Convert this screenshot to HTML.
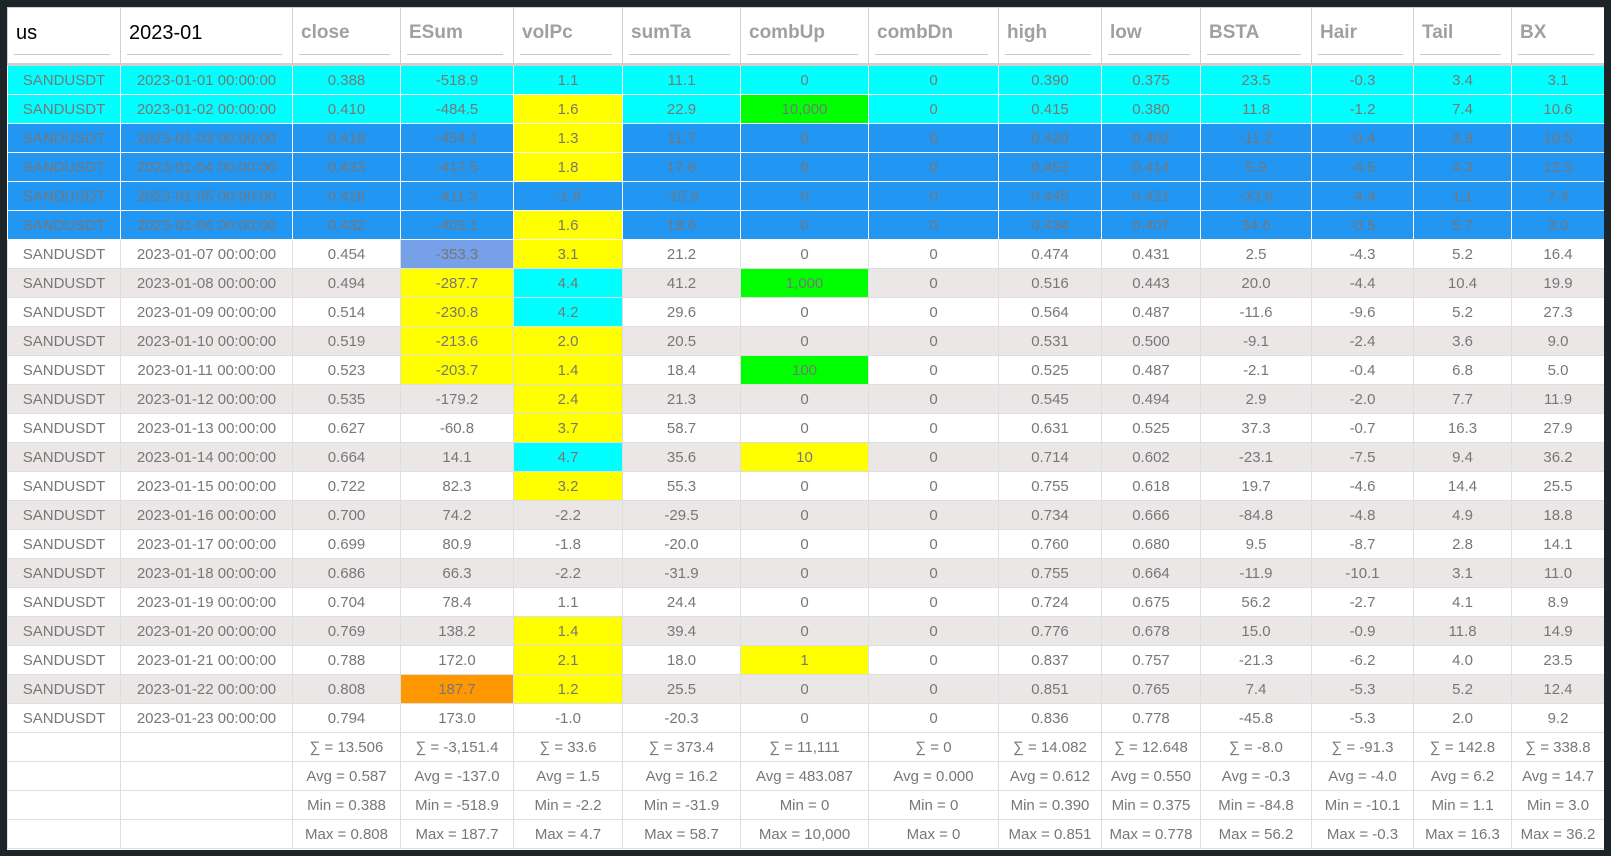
<!DOCTYPE html>
<html><head><meta charset="utf-8"><style>
html,body{margin:0;padding:0;background:#1e2528;width:1611px;height:856px;overflow:hidden}
.wrap{position:absolute;left:7px;top:7px;width:1597px;height:843px;background:#fff;overflow:hidden}
table{border-collapse:collapse;table-layout:fixed;width:1597px;font-family:"Liberation Sans",sans-serif}
td{height:28px;padding:0;border:1px solid #dedede;text-align:center;font-size:15px;color:#777;white-space:nowrap;overflow:hidden}
thead td{height:55px;border:1px solid #d0d0d0;border-bottom:3px solid #cfcfcf;text-align:left;vertical-align:top;position:relative}
thead td span{position:absolute;left:8px;top:14px;font-size:19px;font-weight:bold;color:#a0a0a0}
thead td.k span{color:#000;font-weight:normal;font-size:20px}
thead td i{position:absolute;left:6px;right:10px;top:46px;border-top:1px solid #c8c8c8}
tr.c td{background:#00ffff;border-color:#fff}
tr.b td{background:#2196f3;border-color:#fff}
tr.g td{background:#ebe7e6}
td.y{background:#ffff00!important}
td.n{background:#00ff00!important}
td.q{background:#00ffff!important}
td.l{background:#76a0e8!important}
td.o{background:#ff9800!important}
tr.f td{background:#fff}
</style></head><body><div class="wrap"><table>
<colgroup><col style="width:113px"><col style="width:172px"><col style="width:108px"><col style="width:113px"><col style="width:109px"><col style="width:118px"><col style="width:128px"><col style="width:130px"><col style="width:103px"><col style="width:99px"><col style="width:111px"><col style="width:102px"><col style="width:98px"><col style="width:93px"></colgroup>
<thead><tr><td class="k"><span>us</span><i></i></td><td class="k"><span>2023-01</span><i></i></td><td><span>close</span><i></i></td><td><span>ESum</span><i></i></td><td><span>volPc</span><i></i></td><td><span>sumTa</span><i></i></td><td><span>combUp</span><i></i></td><td><span>combDn</span><i></i></td><td><span>high</span><i></i></td><td><span>low</span><i></i></td><td><span>BSTA</span><i></i></td><td><span>Hair</span><i></i></td><td><span>Tail</span><i></i></td><td><span>BX</span><i></i></td></tr></thead>
<tbody>
<tr class="c"><td>SANDUSDT</td><td>2023-01-01 00:00:00</td><td>0.388</td><td>-518.9</td><td>1.1</td><td>11.1</td><td>0</td><td>0</td><td>0.390</td><td>0.375</td><td>23.5</td><td>-0.3</td><td>3.4</td><td>3.1</td></tr>
<tr class="c"><td>SANDUSDT</td><td>2023-01-02 00:00:00</td><td>0.410</td><td>-484.5</td><td class="y">1.6</td><td>22.9</td><td class="n">10,000</td><td>0</td><td>0.415</td><td>0.380</td><td>11.8</td><td>-1.2</td><td>7.4</td><td>10.6</td></tr>
<tr class="b"><td>SANDUSDT</td><td>2023-01-03 00:00:00</td><td>0.418</td><td>-454.1</td><td class="y">1.3</td><td>11.7</td><td>0</td><td>0</td><td>0.420</td><td>0.402</td><td>-11.2</td><td>-0.4</td><td>3.9</td><td>10.5</td></tr>
<tr class="b"><td>SANDUSDT</td><td>2023-01-04 00:00:00</td><td>0.433</td><td>-417.5</td><td class="y">1.8</td><td>17.6</td><td>0</td><td>0</td><td>0.452</td><td>0.414</td><td>5.9</td><td>-4.5</td><td>4.3</td><td>12.5</td></tr>
<tr class="b"><td>SANDUSDT</td><td>2023-01-05 00:00:00</td><td>0.426</td><td>-411.3</td><td>-1.6</td><td>-15.9</td><td>0</td><td>0</td><td>0.445</td><td>0.421</td><td>-33.6</td><td>-4.4</td><td>1.1</td><td>7.4</td></tr>
<tr class="b"><td>SANDUSDT</td><td>2023-01-06 00:00:00</td><td>0.432</td><td>-403.1</td><td class="y">1.6</td><td>18.6</td><td>0</td><td>0</td><td>0.434</td><td>0.407</td><td>34.6</td><td>-0.5</td><td>5.7</td><td>3.0</td></tr>
<tr><td>SANDUSDT</td><td>2023-01-07 00:00:00</td><td>0.454</td><td class="l">-353.3</td><td class="y">3.1</td><td>21.2</td><td>0</td><td>0</td><td>0.474</td><td>0.431</td><td>2.5</td><td>-4.3</td><td>5.2</td><td>16.4</td></tr>
<tr class="g"><td>SANDUSDT</td><td>2023-01-08 00:00:00</td><td>0.494</td><td class="y">-287.7</td><td class="q">4.4</td><td>41.2</td><td class="n">1,000</td><td>0</td><td>0.516</td><td>0.443</td><td>20.0</td><td>-4.4</td><td>10.4</td><td>19.9</td></tr>
<tr><td>SANDUSDT</td><td>2023-01-09 00:00:00</td><td>0.514</td><td class="y">-230.8</td><td class="q">4.2</td><td>29.6</td><td>0</td><td>0</td><td>0.564</td><td>0.487</td><td>-11.6</td><td>-9.6</td><td>5.2</td><td>27.3</td></tr>
<tr class="g"><td>SANDUSDT</td><td>2023-01-10 00:00:00</td><td>0.519</td><td class="y">-213.6</td><td class="y">2.0</td><td>20.5</td><td>0</td><td>0</td><td>0.531</td><td>0.500</td><td>-9.1</td><td>-2.4</td><td>3.6</td><td>9.0</td></tr>
<tr><td>SANDUSDT</td><td>2023-01-11 00:00:00</td><td>0.523</td><td class="y">-203.7</td><td class="y">1.4</td><td>18.4</td><td class="n">100</td><td>0</td><td>0.525</td><td>0.487</td><td>-2.1</td><td>-0.4</td><td>6.8</td><td>5.0</td></tr>
<tr class="g"><td>SANDUSDT</td><td>2023-01-12 00:00:00</td><td>0.535</td><td>-179.2</td><td class="y">2.4</td><td>21.3</td><td>0</td><td>0</td><td>0.545</td><td>0.494</td><td>2.9</td><td>-2.0</td><td>7.7</td><td>11.9</td></tr>
<tr><td>SANDUSDT</td><td>2023-01-13 00:00:00</td><td>0.627</td><td>-60.8</td><td class="y">3.7</td><td>58.7</td><td>0</td><td>0</td><td>0.631</td><td>0.525</td><td>37.3</td><td>-0.7</td><td>16.3</td><td>27.9</td></tr>
<tr class="g"><td>SANDUSDT</td><td>2023-01-14 00:00:00</td><td>0.664</td><td>14.1</td><td class="q">4.7</td><td>35.6</td><td class="y">10</td><td>0</td><td>0.714</td><td>0.602</td><td>-23.1</td><td>-7.5</td><td>9.4</td><td>36.2</td></tr>
<tr><td>SANDUSDT</td><td>2023-01-15 00:00:00</td><td>0.722</td><td>82.3</td><td class="y">3.2</td><td>55.3</td><td>0</td><td>0</td><td>0.755</td><td>0.618</td><td>19.7</td><td>-4.6</td><td>14.4</td><td>25.5</td></tr>
<tr class="g"><td>SANDUSDT</td><td>2023-01-16 00:00:00</td><td>0.700</td><td>74.2</td><td>-2.2</td><td>-29.5</td><td>0</td><td>0</td><td>0.734</td><td>0.666</td><td>-84.8</td><td>-4.8</td><td>4.9</td><td>18.8</td></tr>
<tr><td>SANDUSDT</td><td>2023-01-17 00:00:00</td><td>0.699</td><td>80.9</td><td>-1.8</td><td>-20.0</td><td>0</td><td>0</td><td>0.760</td><td>0.680</td><td>9.5</td><td>-8.7</td><td>2.8</td><td>14.1</td></tr>
<tr class="g"><td>SANDUSDT</td><td>2023-01-18 00:00:00</td><td>0.686</td><td>66.3</td><td>-2.2</td><td>-31.9</td><td>0</td><td>0</td><td>0.755</td><td>0.664</td><td>-11.9</td><td>-10.1</td><td>3.1</td><td>11.0</td></tr>
<tr><td>SANDUSDT</td><td>2023-01-19 00:00:00</td><td>0.704</td><td>78.4</td><td>1.1</td><td>24.4</td><td>0</td><td>0</td><td>0.724</td><td>0.675</td><td>56.2</td><td>-2.7</td><td>4.1</td><td>8.9</td></tr>
<tr class="g"><td>SANDUSDT</td><td>2023-01-20 00:00:00</td><td>0.769</td><td>138.2</td><td class="y">1.4</td><td>39.4</td><td>0</td><td>0</td><td>0.776</td><td>0.678</td><td>15.0</td><td>-0.9</td><td>11.8</td><td>14.9</td></tr>
<tr><td>SANDUSDT</td><td>2023-01-21 00:00:00</td><td>0.788</td><td>172.0</td><td class="y">2.1</td><td>18.0</td><td class="y">1</td><td>0</td><td>0.837</td><td>0.757</td><td>-21.3</td><td>-6.2</td><td>4.0</td><td>23.5</td></tr>
<tr class="g"><td>SANDUSDT</td><td>2023-01-22 00:00:00</td><td>0.808</td><td class="o">187.7</td><td class="y">1.2</td><td>25.5</td><td>0</td><td>0</td><td>0.851</td><td>0.765</td><td>7.4</td><td>-5.3</td><td>5.2</td><td>12.4</td></tr>
<tr><td>SANDUSDT</td><td>2023-01-23 00:00:00</td><td>0.794</td><td>173.0</td><td>-1.0</td><td>-20.3</td><td>0</td><td>0</td><td>0.836</td><td>0.778</td><td>-45.8</td><td>-5.3</td><td>2.0</td><td>9.2</td></tr>
<tr class="f"><td></td><td></td><td>∑ = 13.506</td><td>∑ = -3,151.4</td><td>∑ = 33.6</td><td>∑ = 373.4</td><td>∑ = 11,111</td><td>∑ = 0</td><td>∑ = 14.082</td><td>∑ = 12.648</td><td>∑ = -8.0</td><td>∑ = -91.3</td><td>∑ = 142.8</td><td>∑ = 338.8</td></tr>
<tr class="f"><td></td><td></td><td>Avg = 0.587</td><td>Avg = -137.0</td><td>Avg = 1.5</td><td>Avg = 16.2</td><td>Avg = 483.087</td><td>Avg = 0.000</td><td>Avg = 0.612</td><td>Avg = 0.550</td><td>Avg = -0.3</td><td>Avg = -4.0</td><td>Avg = 6.2</td><td>Avg = 14.7</td></tr>
<tr class="f"><td></td><td></td><td>Min = 0.388</td><td>Min = -518.9</td><td>Min = -2.2</td><td>Min = -31.9</td><td>Min = 0</td><td>Min = 0</td><td>Min = 0.390</td><td>Min = 0.375</td><td>Min = -84.8</td><td>Min = -10.1</td><td>Min = 1.1</td><td>Min = 3.0</td></tr>
<tr class="f"><td></td><td></td><td>Max = 0.808</td><td>Max = 187.7</td><td>Max = 4.7</td><td>Max = 58.7</td><td>Max = 10,000</td><td>Max = 0</td><td>Max = 0.851</td><td>Max = 0.778</td><td>Max = 56.2</td><td>Max = -0.3</td><td>Max = 16.3</td><td>Max = 36.2</td></tr>
</tbody></table></div></body></html>
